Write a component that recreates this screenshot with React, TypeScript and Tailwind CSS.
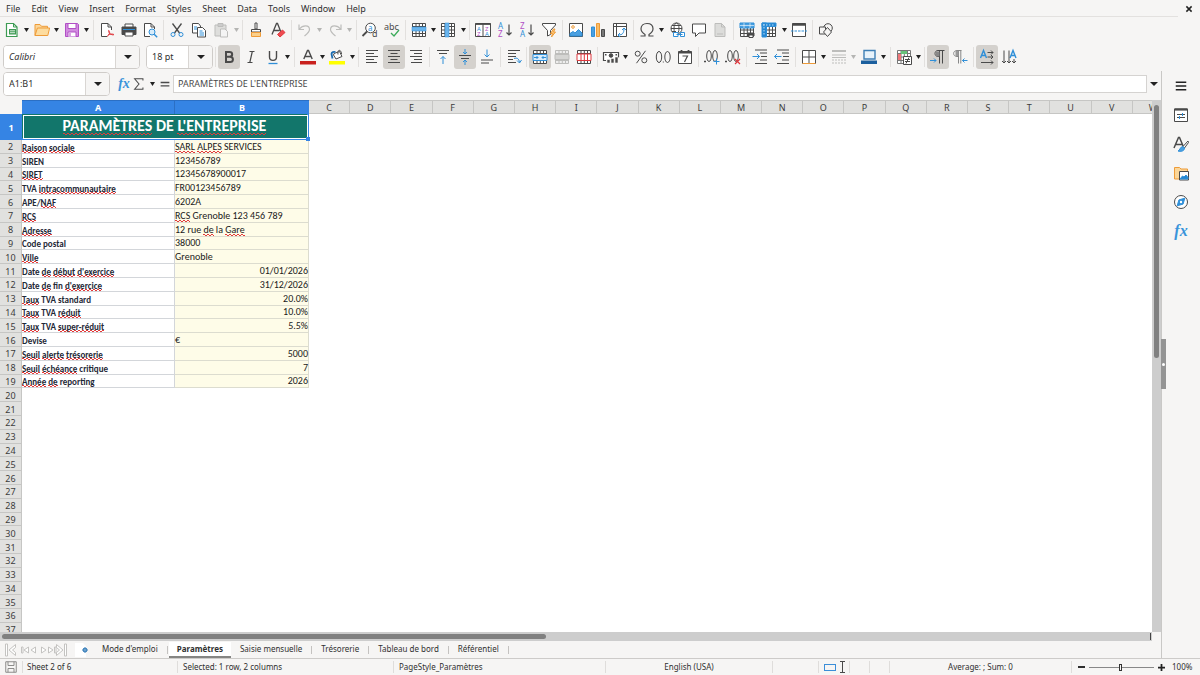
import type { ReactNode } from 'react';
import clsx from 'clsx';

const INK = '#4a4a4a';
const BLUE = '#2f8fd8';
const RED = '#e0383e';
const ORANGE = '#ee9b38';
const PURPLE = '#b14fc5';
const GREY = '#bdbdbb';

const MENUS = ['File', 'Edit', 'View', 'Insert', 'Format', 'Styles', 'Sheet', 'Data', 'Tools', 'Window', 'Help'];
const COLUMNS = 'CDEFGHIJKLMNOPQRSTUVW'.split('');

// Words between asterisks are flagged by the spell checker
const ROWS: { label: string; value: string; right?: boolean }[] = [
  { label: '*Raison* *sociale*', value: '*SARL* *ALPES* SERVICES' },
  { label: 'SIREN', value: '123456789' },
  { label: '*SIRET*', value: '12345678900017' },
  { label: 'TVA *intracommunautaire*', value: 'FR00123456789' },
  { label: 'APE/*NAF*', value: '6202A' },
  { label: '*RCS*', value: '*RCS* Grenoble 123 456 789' },
  { label: '*Adresse*', value: '12 rue *de* la *Gare*' },
  { label: 'Code postal', value: '38000' },
  { label: '*Ville*', value: 'Grenoble' },
  { label: "Date *de* *début* *d'exercice*", value: '01/01/2026', right: true },
  { label: "Date *de* fin *d'exercice*", value: '31/12/2026', right: true },
  { label: '*Taux* TVA standard', value: '20.0%', right: true },
  { label: '*Taux* TVA *réduit*', value: '10.0%', right: true },
  { label: '*Taux* TVA *super-réduit*', value: '5.5%', right: true },
  { label: 'Devise', value: '€' },
  { label: '*Seuil* *alerte* *trésorerie*', value: '5000', right: true },
  { label: '*Seuil* *échéance* critique', value: '7', right: true },
  { label: '*Année* *de* reporting', value: '2026', right: true },
];

const EMPTY_ROWS = Array.from({ length: 18 }, (_, i) => i + 20);

const SHEETS = ["Mode d'emploi", 'Paramètres', 'Saisie mensuelle', 'Trésorerie', 'Tableau de bord', 'Référentiel'];

function Spelled({ text }: { text: string }) {
  return (
    <>
      {text.split('*').map((part, i) =>
        i % 2 ? (
          <span
            key={i}
            className="bg-repeat-x [background-image:linear-gradient(90deg,#e23b3b_50%,transparent_50%),linear-gradient(90deg,transparent_50%,#e23b3b_50%)] [background-position:0_calc(100%-1px),0_100%] [background-size:4px_1px]"
          >
            {part}
          </span>
        ) : (
          part
        )
      )}
    </>
  );
}

function Svg({ children, className = 'size-4' }: { children: ReactNode; className?: string }) {
  return (
    <svg viewBox="0 0 16 16" className={clsx('shrink-0 overflow-visible', className)} fill="none" stroke={INK} strokeWidth="1" aria-hidden="true">
      {children}
    </svg>
  );
}

function Glyph({ x, y, size, fill = INK, children }: { x: number; y: number; size: number; fill?: string; children: string }) {
  return (
    <text x={x} y={y} fontSize={size} fill={fill} stroke="none" fontFamily="Noto Sans, sans-serif">
      {children}
    </text>
  );
}

const TABLE_LINES = 'M1.5 1.5h13v13h-13zM1.5 4.5h13M1.5 8h13M1.5 11.5h13M5 1.5v13M8.3 1.5v13M11.5 1.5v13';

const icons: Record<string, ReactNode> = {
  new: (
    <>
      <path d="M2.500 1.500h7l3.500 3.500v9.500H2.500z" fill="#fff" stroke="#3d9b53" strokeWidth="1.200" />
      <path d="M9.500 1.500V5H13" stroke="#3d9b53" />
      <path d="M5 7h7v5.500H5z" fill="#3d9b53" stroke="none" />
      <path d="M6 8.800h5M6 10.700h5" stroke="#fff" strokeWidth=".8" />
    </>
  ),
  open: (
    <>
      <path d="M1 13.500V2.500h5l1.500 1.800h6V6" fill="#fbd699" stroke={ORANGE} />
      <path d="M3.400 6h12.200l-1.800 7.500H1z" fill="#fddc9f" stroke={ORANGE} />
    </>
  ),
  save: (
    <>
      <path d="M1.500 1.500h12l1 1v12h-13z" fill="#d28be0" stroke={PURPLE} />
      <path d="M4 1.500h8v5H4z" fill="#fff" stroke={PURPLE} />
      <path d="M4 14.500V10h8v4.500" fill="#fff" stroke={PURPLE} />
      <path d="M6 11v3" stroke={PURPLE} />
    </>
  ),
  pdf: (
    <>
      <path d="M12.500 8V5L9 1.500H2.500v13H8" fill="#fff" />
      <path d="M9 1.500V5h3.500" />
      <path d="M8 14.500c3-2 3-5 2-6s-1 4 4.500 4.500M9 13c2-1 4-1.300 6-.5" stroke={RED} />
    </>
  ),
  print: (
    <>
      <path d="M4 5V2h8v3" fill="#fff" />
      <path d="M1 5h14v7.500H1z" fill={INK} />
      <path d="M2 7.500h12" stroke={BLUE} />
      <path d="M4 10h8v4H4z" fill="#fff" />
    </>
  ),
  preview: (
    <>
      <path d="M12.500 7V5L9 1.500H2.500v13H8" fill="#fff" />
      <path d="M9 1.500V5h3.500" />
      <circle cx="10" cy="10" r="3" fill="#d8ecfa" stroke={BLUE} />
      <path d="m12.200 12.200 3 3" stroke={BLUE} strokeWidth="1.400" />
    </>
  ),
  cut: (
    <>
      <path d="m3.500 1.500 7 9.500M12.500 1.500l-7 9.500" strokeWidth="1.300" />
      <circle cx="4" cy="12.500" r="2" stroke={BLUE} />
      <circle cx="12" cy="12.500" r="2" stroke={BLUE} />
    </>
  ),
  copy: (
    <>
      <path d="M1.500 1.500h6L9.500 4v7h-8z" fill="#fff" />
      <path d="M6.500 5.500h5l3 3v6.500h-8z" fill="#fff" />
      <path d="M3 5h3M3 7h3" stroke={BLUE} />
      <path d="M8.500 9h3M8.500 11h4.500M8.500 13h4.500" stroke={BLUE} />
    </>
  ),
  paste: (
    <>
      <path d="M2 3h11v11H2z" fill="#dededc" stroke={GREY} />
      <path d="M5 1.500h5v3H5z" fill="#ccc" stroke={GREY} />
      <path d="M7.500 7h4.500l2.500 2.500v5.500h-7z" fill="#f4f4f4" stroke={GREY} />
    </>
  ),
  clone: (
    <>
      <path d="M7 1h2v6H7z" fill="#fff" />
      <path d="M3.500 7.500h9v2.500h-9z" fill="#fff" />
      <path d="M3.500 10.500h9v4h-9z" fill="#fbd08b" stroke={ORANGE} />
    </>
  ),
  clear: (
    <>
      <path d="m2 12.500 4.500-11h1l4 10M3.500 8.500h6" strokeWidth="1.300" />
      <path d="m7.500 12.500 5-4.500 2.500 2.500-5 4.500z" fill="#ef4b50" stroke={RED} />
    </>
  ),
  undo: <path d="M2 2.500v5h5M2.500 7c3-4 10-4.500 10 .500 0 2.500-2.500 4.500-5 6.500" stroke={GREY} strokeWidth="1.200" />,
  redo: <path d="M14 2.500v5H9M13.500 7c-3-4-10-4.500-10 .500 0 2.500 2.500 4.500 5 6.500" stroke={GREY} strokeWidth="1.200" />,
  find: (
    <>
      <circle cx="8.500" cy="6" r="4.800" fill="#fff" />
      <path d="M5 9.500.5 14" strokeWidth="1.800" />
      <Glyph x={6} y={8.5} size={8} fill={BLUE}>a</Glyph>
      <Glyph x={10} y={15} size={9}>d</Glyph>
    </>
  ),
  spell: (
    <>
      <Glyph x={0} y={8} size={9}>abc</Glyph>
      <path d="m7 11 3 3 5-6" stroke="#3cab5a" strokeWidth="1.300" />
    </>
  ),
  row: (
    <>
      <path d={TABLE_LINES} fill="#fff" />
      <path d="M1 5h14v4H1z" fill="#6ab4ec" stroke={BLUE} strokeWidth=".5" />
    </>
  ),
  column: (
    <>
      <path d={TABLE_LINES} fill="#fff" />
      <path d="M5 1h4v14H5z" fill="#6ab4ec" stroke={BLUE} strokeWidth=".5" />
    </>
  ),
  sort: (
    <>
      <path d="M.500 1.500h15v13H.500zM8 1.500v13" fill="#fff" />
      <path d="M.500 2h15" strokeWidth="1.800" />
      <Glyph x={2} y={8.5} size={6} fill={BLUE}>A</Glyph>
      <Glyph x={2} y={14} size={6} fill={PURPLE}>Z</Glyph>
      <Glyph x={10} y={8.5} size={6} fill={PURPLE}>Z</Glyph>
      <Glyph x={10} y={14} size={6} fill={BLUE}>A</Glyph>
    </>
  ),
  sortAsc: (
    <>
      <Glyph x={1} y={7} size={8} fill={BLUE}>A</Glyph>
      <Glyph x={1} y={15} size={8} fill={PURPLE}>Z</Glyph>
      <path d="M12 2.500v10.500M9.500 10.500 12 13l2.500-2.500" strokeWidth="1.200" />
    </>
  ),
  sortDesc: (
    <>
      <Glyph x={1} y={7} size={8} fill={PURPLE}>Z</Glyph>
      <Glyph x={1} y={15} size={8} fill={BLUE}>A</Glyph>
      <path d="M12 2.500v10.500M9.500 10.500 12 13l2.500-2.500" strokeWidth="1.200" />
    </>
  ),
  filter: (
    <>
      <path d="M1.500 1.500h13V3L9.500 8.500v4l-3 1.500V8.500l-5-5.500z" fill="#fff" />
      <path d="m12.500 7-3 4.500h2L10.500 15l4-5h-2l1.500-3z" fill="#fbc77a" stroke={ORANGE} />
    </>
  ),
  image: (
    <>
      <path d="M1.500 1.500h13v13h-13z" fill="#fff" />
      <circle cx="5" cy="5" r="1.300" stroke={ORANGE} />
      <path d="m2 14 0-2.500 3-2 2 1.500 3.500-3.500L14 11v3z" fill="#4ba0e0" stroke={BLUE} />
    </>
  ),
  chart: (
    <>
      <path d="M1.500 5h3v9.500h-3z" fill="#4ba0e0" stroke={BLUE} />
      <path d="M6.500 1.500h3v13h-3z" fill="#f8bd68" stroke={ORANGE} />
      <path d="M11.500 7.500h3v7h-3z" fill="#777" />
    </>
  ),
  pivot: (
    <>
      <path d="M1.500 1.500h13v13h-13zM1.500 4.500h13M4.500 1.500v13" fill="#fff" />
      <path d="M6.500 13c4 0 5.500-2 5.500-6.500M10 8l2-2 2 2M8 11l-2 2 2 2" stroke={BLUE} />
    </>
  ),
  omega: <path d="M1.500 14h4.500v-1.500C3.500 11 2 9 2 6.800 2 3.500 4.500 1.500 8 1.500s6 2 6 5.300c0 2.200-1.500 4.200-4 5.700V14h4.500" strokeWidth="1.200" />,
  link: (
    <>
      <circle cx="7.500" cy="6.500" r="5.500" fill="#fff" />
      <ellipse cx="7.500" cy="6.500" rx="2.500" ry="5.500" />
      <path d="M2 6.500h11M3 3.500h9M3 9.500h4" />
      <path d="M4.500 10.500h4.500v4H4.500zM11.500 10.500h4v4h-4z" fill="#fff" stroke={BLUE} strokeLinejoin="round" />
      <path d="M7.500 12.500h6" stroke={BLUE} />
    </>
  ),
  comment: <path d="M1.500 2h13v9H8l-3.500 3.500V11h-3z" fill="#fff" />,
  page: (
    <>
      <path d="M3 1.500h6.500L13 5v9.500H3z" fill="#dcdcda" stroke={GREY} />
      <path d="M9.500 1.500V5H13M5 12h6" stroke={GREY} />
    </>
  ),
  header: (
    <>
      <path d={TABLE_LINES} fill="#fff" />
      <path d="M1 1h14v5H1z" fill="#4ba0e0" stroke={BLUE} />
      <path d="M5 1v5M11 1v5M1 3.500h14" stroke="#fff" strokeWidth=".6" />
      <path d="M8.500 11h6.500v3H8.500z" fill={INK} />
      <path d="M10 13h4v2.500h-4z" fill="#fff" />
    </>
  ),
  freeze: (
    <>
      <path d={TABLE_LINES} fill="#fff" />
      <path d="M1 1h4.500v14H1zM1 1h14v3.500H1z" fill="#2487d2" stroke={BLUE} />
      <path d="M3 2v11M2 3h12" stroke="#bfe0f8" strokeDasharray="1.500 1.500" />
    </>
  ),
  split: (
    <>
      <path d="M1.500 1.500h13v13h-13z" fill="#fff" />
      <path d="M1.500 2.500h13" strokeWidth="2.500" />
      <path d="M0 9h16" stroke={BLUE} strokeDasharray="2.500 1" />
    </>
  ),
  shapes: (
    <>
      <circle cx="10" cy="6" r="4.300" />
      <path d="M1.500 5h6v7h-6z" fill="#f6f5f4" />
      <path d="m9.500 5.500 4 4.500-4 4.500-4-4.500z" fill="#f6f5f4" />
    </>
  ),
  bold: <path d="M5 3h3.500c3.500 0 3.500 4.500.3 4.800H5zM5 7.800h4c4 .2 3.800 5.200 0 5.200H5z" strokeWidth="2" />,
  italic: <path d="M6.500 2.500h5M4.500 13.500h5M9.300 2.500l-2.500 11" strokeWidth="1.200" />,
  underline: (
    <>
      <path d="M4.500 2v6c0 4.500 7 4.500 7 0V2" strokeWidth="1.400" />
      <path d="M3.500 14.500h9" stroke={BLUE} strokeWidth="1.300" />
    </>
  ),
  fontColor: (
    <>
      <path d="m3.800 10 3.700-8.500h1l3.700 8.500M5.200 7.500h5.600" strokeWidth="1.400" />
      <path d="M0 12h16v3.500H0z" fill="#c9211e" stroke="none" />
    </>
  ),
  fill: (
    <>
      <path d="m5 4.500 5.500-2L13 7.500 7 10 4.500 6z" fill="#fff" />
      <path d="M9 5.500c-1-6 3.500-5 3.500-.500" />
      <path d="M3.500 9.500 2.500 5c0-2 2-2.500 4-2" stroke="#1b6cb0" strokeWidth="1.800" />
      <path d="M0 12h16v3.500H0z" fill="#ffff00" stroke="none" />
    </>
  ),
  left: <path d="M2 1.500h12M2 4.500h8M2 7.500h12M2 10.500h8M2 13.500h11" strokeWidth="1.100" />,
  center: <path d="M2 1.500h12M4.500 4.500h7M2 7.500h12M4.500 10.500h7M2 13.500h12" strokeWidth="1.100" />,
  right: <path d="M2 1.500h12M6 4.500h8M2 7.500h12M6 10.500h8M3 13.500h11" strokeWidth="1.100" />,
  top: (
    <>
      <path d="M2 1.500h12M4 4.500h8" />
      <path d="M8 15V7.500M5.500 10 8 7.500l2.500 2.500" stroke={BLUE} />
    </>
  ),
  middle: (
    <>
      <path d="M2 6.500h12M4 9.500h8" />
      <path d="M8 0v5M6 3l2 2 2-2M8 16v-5M6 13l2-2 2 2" stroke={BLUE} />
    </>
  ),
  bottom: (
    <>
      <path d="M2 11h12M2 14h8" />
      <path d="M8 .5v7.500M5.500 5.500 8 8l2.500-2.500" stroke={BLUE} />
    </>
  ),
  wrap: (
    <>
      <path d="M2 1.500h12M2 4.500h8M2 7.500h8M2 10.500h5M2 13.500h8" />
      <path d="M8 9.500c3-1 5 0 5.500 4M11 11.500l2.500 2.500 2-3" stroke={BLUE} />
    </>
  ),
  merge: (
    <>
      <path d={TABLE_LINES} fill="#fff" />
      <path d="M1 5.500h14v6H1z" fill="#d8ecfb" stroke={BLUE} />
      <path d="M2 8.500h4M4.500 7 6 8.500 4.500 10M14 8.500h-4M11.500 7 10 8.500l1.500 1.500" stroke={BLUE} />
    </>
  ),
  mergeOff: (
    <>
      <path d={TABLE_LINES} fill="#eee" stroke={GREY} />
      <path d="M1 5.500h14v5H1z" fill="#d5d5d3" stroke={GREY} />
    </>
  ),
  unmerge: (
    <>
      <path d={TABLE_LINES} fill="#fff" />
      <path d="M1 5h14v6.500H1zM5 5v6.500M8.300 5v6.500M11.500 5v6.500" fill="#fff" stroke={RED} />
    </>
  ),
  currency: (
    <>
      <path d="M3 11.500H.5v-8h15v5" fill="#fff" strokeWidth="1.200" />
      <path d="M2 5h1.500v1.500H2zM12.500 5H14v1.500h-1.500z" fill={INK} stroke="none" />
      <circle cx="8" cy="6.500" r="1.800" fill={INK} />
      <path d="M4 10.500h3v3.500H4zM8 9.500h3v4.500H8zM12 8h3v6h-3z" fill={INK} stroke="#f6f5f4" strokeWidth=".6" />
    </>
  ),
  percent: (
    <>
      <circle cx="4.700" cy="4.700" r="2.500" />
      <circle cx="11.300" cy="11.300" r="2.500" />
      <path d="M12.500 1.800 3.500 14.200" />
    </>
  ),
  decimal: (
    <>
      <ellipse cx="4" cy="8" rx="2.700" ry="5.500" />
      <ellipse cx="12.500" cy="8" rx="2.700" ry="5.500" />
      <path d="M7.800 12.500h1v1h-1z" fill={INK} stroke="none" />
    </>
  ),
  date: (
    <>
      <path d="M1.500 2.500h13v12h-13z" fill="#fff" />
      <path d="M1.500 3.500h13M4.500 1v3M11.500 1v3" strokeWidth="1.800" />
      <path d="M5.500 7h5l-3 6" strokeWidth="1.200" />
    </>
  ),
  addDecimal: (
    <>
      <ellipse cx="5" cy="7" rx="2.300" ry="5.500" />
      <ellipse cx="11" cy="7" rx="2.300" ry="5.500" />
      <path d="M.5 12h1v1h-1z" fill={INK} />
      <path d="M9.500 12.500h6M12.500 9.500v6" stroke={BLUE} />
    </>
  ),
  dropDecimal: (
    <>
      <ellipse cx="5" cy="7" rx="2.300" ry="5.500" />
      <ellipse cx="11" cy="7" rx="2.300" ry="5.500" />
      <path d="M.5 12h1v1h-1z" fill={INK} />
      <path d="m10 10 5 5M15 10l-5 5" stroke={RED} strokeWidth="1.200" />
    </>
  ),
  indent: (
    <>
      <path d="M3 1h12M8 4h7M9 7.500h6M8 11h7M3 14.500h12" />
      <path d="M.5 7.500h7M5 5l2.500 2.500L5 10" stroke={BLUE} />
    </>
  ),
  outdent: (
    <>
      <path d="M3 1h12M8 4h7M9 7.500h6M8 11h7M3 14.500h12" />
      <path d="M7.500 7.500h-7M3 5 .5 7.500 3 10" stroke={BLUE} />
    </>
  ),
  borders: (
    <>
      <path d="M1.500 1.500h13v13h-13zM8 1.500v13M1.500 8h13" fill="#fff" />
      <path d="M1.500 14.500h13" stroke={ORANGE} />
    </>
  ),
  lineStyle: (
    <>
      <path d="M1 2h14" strokeWidth="2" stroke={GREY} />
      <path d="M1 6h14M1 8.500h14" stroke={GREY} />
      <path d="M1 11h14M1 14h14" stroke={GREY} strokeDasharray="2 1" />
    </>
  ),
  lineColor: (
    <>
      <path d="M3 1.500h11v8.500H3z" fill="#e8f3fb" stroke="#3f7fb5" strokeWidth="1.400" />
      <path d="M0 11.500h16V15H0z" fill="#1b5f9e" stroke="none" />
    </>
  ),
  conditional: (
    <>
      <path d={TABLE_LINES} fill="#fff" stroke="#777" />
      <path d="M5 2h6v3H5z" fill="#67c27a" stroke="none" />
      <path d="M2 5h3v6H2z" fill="#ef7679" stroke="none" />
      <path d="M7.500 7.500h8v8h-8z" fill="#fff" />
      <path d="M9 10.500h5M9 12.500h5M13 8.500l-3 6" />
    </>
  ),
  ltr: (
    <>
      <path d="M14.500 1.500H8c-4 0-4 6 0 6h1.500M9.500 1.500v13M12.500 1.500v13" />
      <path d="M6 2.500h3.500v5H6z" fill="#888" stroke="none" />
      <path d="M0 11.500h6M4 9.500l2 2-2 2" stroke={BLUE} />
    </>
  ),
  rtl: (
    <>
      <path d="M9.500 1.500H5c-4.500 0-4.500 6 0 6h1M6.500 1.500v13M8.800 1.500v13" stroke="#888" />
      <path d="M3.500 2h3v5h-3z" fill="#999" stroke="none" />
      <path d="M15.500 11.500h-5M12.500 9.500l-2 2 2 2" stroke={BLUE} />
    </>
  ),
  textLtr: (
    <>
      <path d="m1.500 9 3-7.500L7.500 9M2.500 6.500h4" stroke={BLUE} strokeWidth="1.400" />
      <path d="M8.500 3.500H14M8.500 8H14M2 13.500h12M12 1.500l2 2-2 2M12 6l2 2-2 2M12 11.500l2 2-2 2" />
    </>
  ),
  textTtb: (
    <>
      <path d="m9 9 3-7.500L15 9M10 6.500h4" stroke={BLUE} strokeWidth="1.400" />
      <path d="M3 1.500v12.500M8 1.500v12.500M13 10v4M1 12l2 2 2-2M6 12l2 2 2-2M11 12l2 2 2-2" />
    </>
  ),
  properties: (
    <>
      <path d="M1.500 2h13v12.500h-13z" fill="#fff" />
      <path d="M1.500 2.500h13" strokeWidth="2.200" />
      <path d="M4 7.500h8M4 10.500h8" />
      <path d="M9.500 6v3M6.500 9v3" stroke={BLUE} />
    </>
  ),
  styles: (
    <>
      <path d="m1 12 4.500-10.500h1L10.500 11M2.800 8.500h6.400" strokeWidth="1.500" />
      <path d="m15 5-5 5.500 1.500 1.500 4-5.500z" fill="#fff" />
      <path d="M10 10.500c-3 0-3 4-5 4.500 3 1 6.500 0 6.500-3z" fill="#4ba0e0" stroke={BLUE} />
    </>
  ),
  gallery: (
    <>
      <path d="M1.500 14V2.500h5L8 4h6.500v10z" fill="#fbd699" stroke={ORANGE} />
      <path d="M6.500 6.500h9v8.500h-9z" fill="#fff" />
      <path d="m7 14 2.500-3 1.500 1 2-2 2 2.500V14z" fill="#2487d2" stroke={BLUE} />
    </>
  ),
  navigator: (
    <>
      <circle cx="8" cy="8" r="6.500" fill="#fff" />
      <path d="m11.800 4.200-1.700 5.900-5.900 1.700 1.700-5.900z" fill="#2f8fd8" stroke={BLUE} />
      <circle cx="8" cy="8" r="1.200" fill="#fff" stroke="none" />
    </>
  ),
};

type ToolProps = { icon: string; label: string; drop?: boolean; active?: boolean; disabled?: boolean };

function Caret({ light, large }: { light?: boolean; large?: boolean }) {
  return (
    <svg viewBox="0 0 8 4" className={large ? 'h-1 w-2' : 'h-1 w-[5px]'} fill={light ? '#b5b5b3' : '#222'} preserveAspectRatio="none" aria-hidden="true">
      <path d="M0 0h8L4 4z" />
    </svg>
  );
}

function Tool({ icon, label, drop, active, disabled }: ToolProps) {
  return (
    <>
      <button
        type="button"
        aria-label={label}
        disabled={disabled}
        className={clsx('flex h-6 w-[22px] items-center justify-center rounded-[3px]', active && 'bg-[#d4d1cd]')}
      >
        <Svg>{icons[icon]}</Svg>
      </button>
      {drop && (
        <button type="button" aria-label={`${label} options`} disabled={disabled} className="flex h-6 w-2 items-center justify-center">
          <Caret light={disabled} />
        </button>
      )}
    </>
  );
}

function Toolbar({ groups, className }: { groups: ToolProps[][]; className: string }) {
  return (
    <div role="toolbar" className={clsx('flex items-center', className)}>
      {groups.map((group, i) => (
        <div key={i} className="flex min-w-0 items-center">
          {i > 0 && <span className="mx-0.5 h-5 w-px shrink-0 bg-[#e2e0de]" />}
          {group.map((tool) => (
            <Tool key={tool.label} {...tool} />
          ))}
        </div>
      ))}
    </div>
  );
}

const STANDARD: ToolProps[][] = [
  [
    { icon: 'new', label: 'New', drop: true },
    { icon: 'open', label: 'Open', drop: true },
    { icon: 'save', label: 'Save', drop: true },
  ],
  [
    { icon: 'pdf', label: 'Export as PDF' },
    { icon: 'print', label: 'Print' },
    { icon: 'preview', label: 'Print preview' },
  ],
  [
    { icon: 'cut', label: 'Cut' },
    { icon: 'copy', label: 'Copy' },
    { icon: 'paste', label: 'Paste', drop: true, disabled: true },
  ],
  [
    { icon: 'clone', label: 'Clone formatting' },
    { icon: 'clear', label: 'Clear formatting' },
  ],
  [
    { icon: 'undo', label: 'Undo', drop: true, disabled: true },
    { icon: 'redo', label: 'Redo', drop: true, disabled: true },
  ],
  [
    { icon: 'find', label: 'Find and replace' },
    { icon: 'spell', label: 'Spelling' },
  ],
  [
    { icon: 'row', label: 'Row', drop: true },
    { icon: 'column', label: 'Column', drop: true },
  ],
  [
    { icon: 'sort', label: 'Sort' },
    { icon: 'sortAsc', label: 'Sort ascending' },
    { icon: 'sortDesc', label: 'Sort descending' },
    { icon: 'filter', label: 'AutoFilter' },
  ],
  [
    { icon: 'image', label: 'Insert image' },
    { icon: 'chart', label: 'Insert chart' },
    { icon: 'pivot', label: 'Insert pivot table' },
  ],
  [
    { icon: 'omega', label: 'Special character', drop: true },
    { icon: 'link', label: 'Insert hyperlink' },
    { icon: 'comment', label: 'Insert comment' },
    { icon: 'page', label: 'Headers and footers', disabled: true },
  ],
  [
    { icon: 'header', label: 'Define print area' },
    { icon: 'freeze', label: 'Freeze rows and columns', drop: true },
    { icon: 'split', label: 'Split window' },
  ],
  [{ icon: 'shapes', label: 'Show draw functions' }],
];

const FORMATTING: ToolProps[][] = [
  [
    { icon: 'bold', label: 'Bold', active: true },
    { icon: 'italic', label: 'Italic' },
    { icon: 'underline', label: 'Underline', drop: true },
  ],
  [
    { icon: 'fontColor', label: 'Font color', drop: true },
    { icon: 'fill', label: 'Background color', drop: true },
  ],
  [
    { icon: 'left', label: 'Align left' },
    { icon: 'center', label: 'Center horizontally', active: true },
    { icon: 'right', label: 'Align right' },
  ],
  [
    { icon: 'top', label: 'Align top' },
    { icon: 'middle', label: 'Center vertically', active: true },
    { icon: 'bottom', label: 'Align bottom' },
  ],
  [{ icon: 'wrap', label: 'Wrap text' }],
  [
    { icon: 'merge', label: 'Merge and center', active: true },
    { icon: 'mergeOff', label: 'Merge cells', disabled: true },
    { icon: 'unmerge', label: 'Unmerge cells' },
  ],
  [
    { icon: 'currency', label: 'Format as currency', drop: true },
    { icon: 'percent', label: 'Format as percent' },
    { icon: 'decimal', label: 'Format as number' },
    { icon: 'date', label: 'Format as date' },
  ],
  [
    { icon: 'addDecimal', label: 'Add decimal place' },
    { icon: 'dropDecimal', label: 'Delete decimal place' },
  ],
  [
    { icon: 'indent', label: 'Increase indent' },
    { icon: 'outdent', label: 'Decrease indent' },
  ],
  [
    { icon: 'borders', label: 'Borders', drop: true },
    { icon: 'lineStyle', label: 'Border style', drop: true, disabled: true },
    { icon: 'lineColor', label: 'Border color', drop: true },
  ],
  [{ icon: 'conditional', label: 'Conditional formatting', drop: true }],
  [
    { icon: 'ltr', label: 'Left-to-right', active: true },
    { icon: 'rtl', label: 'Right-to-left' },
  ],
  [
    { icon: 'textLtr', label: 'Text direction left to right', active: true },
    { icon: 'textTtb', label: 'Text direction top to bottom' },
  ],
];

function Combo({ label, value, className, italic }: { label: string; value: string; className: string; italic?: boolean }) {
  return (
    <div className={clsx('flex h-6 shrink-0 overflow-hidden rounded-[4px] border border-[#cfccc9] bg-white', className)}>
      <input aria-label={label} defaultValue={value} className={clsx('w-0 min-w-0 flex-1 bg-white pl-[5px] text-[9px] outline-none', italic && 'italic')} />
      <button type="button" aria-label={`${label} list`} className="flex w-6 items-center justify-center border-l border-[#d9d6d3] bg-[#f6f5f4]">
        <Caret large />
      </button>
    </div>
  );
}

function FunctionIcon({ className }: { className: string }) {
  return (
    <span className={clsx("font-['Liberation_Serif',serif] leading-none font-bold text-[#3a94da] italic", className)}>fx</span>
  );
}

function FormulaBar() {
  return (
    <div className="flex h-[29px] items-center pb-1 pl-[3px]">
      <Combo label="Name box" value="A1:B1" className="w-[107px]" />
      <button type="button" aria-label="Function wizard" className="ml-1.5 flex w-4 justify-center">
        <FunctionIcon className="text-[14px]" />
      </button>
      <button type="button" aria-label="Select function" className="flex items-center gap-1">
        <Svg className="size-3.5">
          <path d="M12.500 4V2H3l5 6-5 6h9.500v-2" strokeWidth="1.200" />
        </Svg>
        <Caret />
      </button>
      <button type="button" aria-label="Formula" className="ml-0.5 flex w-4 justify-center">
        <Svg className="size-2.5">
          <path d="M1 5.500h14M1 11h14" strokeWidth="2.200" />
        </Svg>
      </button>
      <input
        aria-label="Input line"
        defaultValue="PARAMÈTRES DE L'ENTREPRISE"
        className="h-[18px] min-w-0 flex-1 border border-[#d5d3d1] bg-white pl-1 text-[9px] text-[#4a4a4a] outline-none"
      />
      <button type="button" aria-label="Expand formula bar" className="flex w-3.5 justify-center">
        <Caret large />
      </button>
    </div>
  );
}

function Grid() {
  const rowHead = 'border-r border-b border-[#c6c6c4] bg-[#e1e1df] p-0 pt-px text-center font-normal text-[#3c3c3c]';

  return (
    <table className="h-[calc(100%+5px)] w-[calc(100%+22px)] table-fixed border-separate border-spacing-0 text-[9px] leading-[11px]">
      <colgroup>
        <col className="w-[22px]" />
        <col className="w-[153px]" />
        <col className="w-[134px]" />
        {COLUMNS.map((name) => (
          <col key={name} />
        ))}
      </colgroup>
      <thead>
        <tr className="h-3.5">
          <td className="bg-[#f6f5f4] p-0" />
          <th className="border-t border-r border-[#2b6fc4] bg-[#3584e4] p-0 font-bold text-white">A</th>
          <th className="border-t border-[#2b6fc4] bg-[#3584e4] p-0 font-bold text-white">B</th>
          {COLUMNS.map((name) => (
            <th key={name} className="border-y border-r border-[#c6c6c4] bg-[#e1e1df] p-0 font-normal text-[#3c3c3c]">
              {name}
            </th>
          ))}
        </tr>
      </thead>
      <tbody>
        <tr className="h-[26px]">
          <th className="bg-[#3584e4] p-0 text-center font-bold text-white">1</th>
          <td colSpan={2} className="p-0">
            <div className="relative flex h-[26px] items-center justify-center border-r-2 border-b-2 border-[#3584e4] bg-[#12766b] pb-px font-['Carlito','Lato',sans-serif] text-[16px] leading-5 font-bold text-white outline -outline-offset-2 outline-white">
              <span>
                <Spelled text="*PARAMÈTRES* DE *L'ENTREPRISE*" />
              </span>
              <span className="absolute -right-[3px] -bottom-[3px] size-1 bg-[#3584e4]" />
            </div>
          </td>
        </tr>
        {ROWS.map((row, i) => (
          <tr key={row.label}>
            <th className={rowHead}>{i + 2}</th>
            <td className="border-r border-b border-[#d3d6da] p-0 align-bottom font-['Carlito','Lato',sans-serif] font-bold whitespace-nowrap text-[#1f2937]">
              <Spelled text={row.label} />
            </td>
            <td
              className={clsx(
                "border-r border-b border-[#dcdccf] bg-[#fefce8] p-0 font-['Carlito','Lato',sans-serif] text-[10px] whitespace-nowrap text-[#1a1a1a]",
                row.right && 'text-right'
              )}
            >
              <Spelled text={row.value} />
            </td>
          </tr>
        ))}
        {EMPTY_ROWS.map((n) => (
          <tr key={n}>
            <th className={rowHead}>{n}</th>
          </tr>
        ))}
      </tbody>
    </table>
  );
}

function SheetTabs() {
  return (
    <div className="flex h-[17px] items-stretch text-[8px]">
      <div className="flex items-center gap-2 pl-[5px]">
        <button type="button" aria-label="Scroll sheets">
          <svg viewBox="0 0 62 14" className="h-3.5 w-[62px]" fill="#fff" stroke="#c4c3c1" strokeWidth="1" aria-hidden="true">
            <path d="M.500 1h2v12h-2zM10.500 1.500 4 7l6.500 5.500v-3L7.500 7l3-2.500zM16.500 4v6h1.500V4zM23.500 4l-4.500 3 4.500 3zM30.500 4 26 7l4.500 3zM36.500 4l4.500 3-4.500 3zM43.500 4 48 7l-4.500 3zM49.500 4v6H51V4zM51.500 1.500 58 7l-6.500 5.500v-3l3-2.500-3-2.500zM59.500 1h2v12h-2z" />
          </svg>
        </button>
        <button type="button" aria-label="Add sheet">
          <svg viewBox="0 0 14 14" className="h-3.5 w-3.5" aria-hidden="true">
            <path d="M0 0h8l3 3v11H0z" fill="#fff" />
            <circle cx="10" cy="7" r="2" fill="#fff" stroke="#1b6cb0" />
            <path d="M10 4.500v5M7.500 7h5" stroke="#1b6cb0" strokeWidth=".8" />
          </svg>
        </button>
      </div>
      <nav className="ml-[5px] flex gap-px">
        {SHEETS.map((name, i) => (
          <div key={name} className="flex items-center">
            <a
              href={`#sheet-${i + 1}`}
              className={clsx(
                'flex h-4 items-center border-b-2 px-2 whitespace-nowrap',
                i === 1 ? 'border-[#858583] bg-white font-bold' : 'border-transparent'
              )}
            >
              {name}
            </a>
            {i !== 1 && <span className="ml-px h-2 w-px bg-[#c4c2c0]" />}
          </div>
        ))}
      </nav>
    </div>
  );
}

function Sidebar() {
  const decks = ['properties', 'styles', 'gallery', 'navigator'];

  return (
    <aside className="relative flex w-[39px] shrink-0 flex-col items-center gap-[5px] border-l border-[#c9c8c6] pt-[3px]">
      <button type="button" aria-label="Sidebar settings" className="flex size-6 items-center justify-center">
        <Svg className="size-3">
          <path d="M1 3h14M1 8h14M1 13h14" stroke="#222" strokeWidth="2" />
        </Svg>
      </button>
      {decks.map((deck) => (
        <button key={deck} type="button" aria-label={deck} className="flex size-6 items-center justify-center">
          <Svg>{icons[deck]}</Svg>
        </button>
      ))}
      <button type="button" aria-label="functions" className="flex size-6 items-center justify-center">
        <FunctionIcon className="text-[16px]" />
      </button>
      <button
        type="button"
        aria-label="Hide sidebar"
        className="absolute top-[268px] left-[-1px] flex h-[50px] w-[5px] items-center justify-center bg-[#949494]"
      >
        <span className="size-[3px] rounded-full bg-white" />
      </button>
    </aside>
  );
}

function StatusBar() {
  const cell = 'flex items-center border-r border-[#dfdddb]';

  return (
    <footer className="grid h-[17px] grid-cols-[23px_155fr_216fr_212fr_167fr_46px_31px_20px_20px_182fr_100px_28px] items-stretch border-t border-[#cdcbc9] py-0.5 text-[8px] whitespace-nowrap">
      <div className={clsx(cell, 'justify-center')}>
        <Svg className="size-3">
          <path d="M1 1h14v14H1zM4 1v5h8V1M4 15v-5h8v5" stroke="#8a8a88" strokeWidth="1.300" />
        </Svg>
      </div>
      <div className={clsx(cell, 'pl-1')}>Sheet 2 of 6</div>
      <div className={clsx(cell, 'pl-[5px]')}>Selected: 1 row, 2 columns</div>
      <div className={clsx(cell, 'pl-[5px]')}>PageStyle_Paramètres</div>
      <div className={clsx(cell, 'justify-center')}>English (USA)</div>
      <div className={cell} />
      <div className={clsx(cell, 'justify-center gap-1')}>
        <span className="h-[7px] w-3 border border-[#3b8ed8]" />
        <svg viewBox="0 0 5 12" className="h-3 w-[5px]" fill="none" stroke="#4a4a4a" aria-hidden="true">
          <path d="M0 .5h5M2.500 0v12M0 11.500h5" />
        </svg>
      </div>
      <div className={cell} />
      <div className={cell} />
      <div className={clsx(cell, 'justify-center')}>Average: ; Sum: 0</div>
      <div className="flex items-center gap-1 pl-1.5">
        <button type="button" aria-label="Zoom out" className="h-0.5 w-[7px] bg-[#2e2e2e]" />
        <input
          type="range"
          aria-label="Zoom"
          defaultValue={49}
          className="h-3 w-[65px] appearance-none bg-transparent [&::-webkit-slider-runnable-track]:h-px [&::-webkit-slider-runnable-track]:bg-[#888] [&::-webkit-slider-thumb]:-mt-[3px] [&::-webkit-slider-thumb]:h-[7px] [&::-webkit-slider-thumb]:w-[3px] [&::-webkit-slider-thumb]:appearance-none [&::-webkit-slider-thumb]:border [&::-webkit-slider-thumb]:border-[#333] [&::-webkit-slider-thumb]:bg-[#f6f5f4]"
        />
        <button type="button" aria-label="Zoom in" className="flex w-[7px]">
          <Svg className="size-[7px]">
            <path d="M8 0v16M0 8h16" stroke="#222" strokeWidth="4" />
          </Svg>
        </button>
      </div>
      <div className="flex items-center">100%</div>
    </footer>
  );
}

export default function App() {
  return (
    <div className="flex h-screen w-full flex-col overflow-hidden bg-[#f6f5f4] font-['Noto_Sans',sans-serif] text-[#303030]">
      {/* Menu bar */}
      <header className="flex h-[17px] shrink-0 items-center justify-between">
        <nav className="flex h-full flex-1 items-center gap-[11px] border-b border-[#e3e1df] pt-px pl-1.5 text-[9px]">
          {MENUS.map((menu) => (
            <button key={menu} type="button">
              {menu}
            </button>
          ))}
        </nav>
        <button type="button" aria-label="Close document" className="mx-2 flex">
          <Svg className="size-1.5">
            <path d="m1 1 14 14M15 1 1 15" stroke="#222" strokeWidth="4" />
          </Svg>
        </button>
      </header>

      {/* Toolbars */}
      <div className="flex h-[26px] shrink-0 items-center pl-px">
        <Toolbar groups={STANDARD} className="w-[836px]" />
      </div>
      <div className="flex h-7 shrink-0 items-center pl-[3px]">
        <Combo label="Font name" value="Calibri" italic className="w-[137px]" />
        <Combo label="Font size" value="18 pt" className="ml-1.5 w-[67px]" />
        <span className="mx-0.5 h-5 w-px bg-[#e2e0de]" />
        <Toolbar groups={FORMATTING} className="w-[802px]" />
      </div>

      <div className="flex min-h-0 flex-1">
        <main className="flex min-w-0 flex-1 flex-col">
          <FormulaBar />
          <div className="flex min-h-0 flex-1">
            <div className="min-w-0 flex-1 overflow-hidden bg-white">
              <Grid />
            </div>
            <div className="flex w-[9px] flex-col items-center bg-[#cdcdcd] pt-[5px]">
              <div className="h-[48%] w-[5px] rounded-full bg-[#808080]" />
            </div>
          </div>
          <div className="flex h-[9px] items-center">
            <div className="flex h-full flex-1 items-center justify-between bg-[#cdcdcd] pr-px pl-0.5">
              <div className="h-[5px] w-9/19 rounded-full bg-[#808080]" />
              <div className="h-[7px] w-px bg-[#444]" />
            </div>
            <div className="w-[9px]" />
          </div>
          <SheetTabs />
        </main>
        <Sidebar />
      </div>

      <StatusBar />
    </div>
  );
}
